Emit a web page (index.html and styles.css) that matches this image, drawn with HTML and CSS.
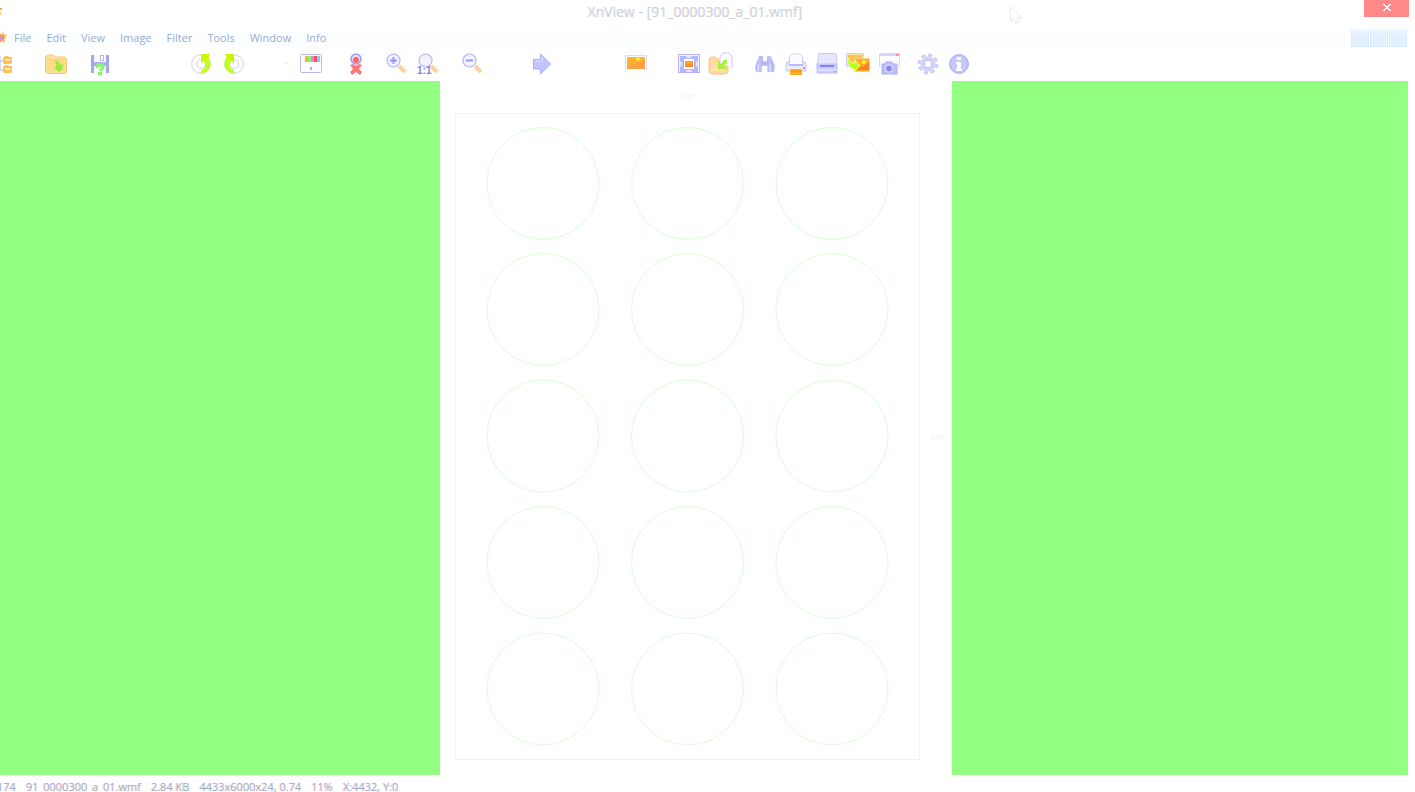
FILE: index.html
```html
<!DOCTYPE html>
<html lang="en">
<head>
<meta charset="utf-8">
<title>XnView - [91_0000300_a_01.wmf]</title>
<link rel="stylesheet" href="styles.css">
</head>
<body>
<div class="window">
<header class="titlebar">
  <svg class="corner" viewBox="0 0 4 12" aria-hidden="true"><path d="M0 2h2v2H0z" fill="#ffb01c"/><path d="M0 6h1v3H0z" fill="#ffc98c"/></svg>
  <h1>XnView - [91_0000300_a_01.wmf]</h1>
  <button class="close" aria-label="Close"><svg viewBox="0 0 8 7" shape-rendering="crispEdges"><path d="M0 0h2v1h1v1h2V1h1V0h2v1H7v1H6v1H5v1h1v1h1v1h1v1H6V6H5V5H3v1H2v1H0V6h1V5h1V4h1V3H2V2H1V1H0z" fill="#fff"/></svg></button>
</header>
<nav class="menubar">
  <svg class="logo" viewBox="0 0 7 14" aria-hidden="true"><path d="M0 2l2 2 1-4 1 4 3-1-2 3 1 1-2 1 1 4-3-2-2 2z" fill="#ffb340"/><circle cx="1" cy="7" r="3" fill="#ff8585"/><circle cx="0" cy="7" r="1.5" fill="#a6a6ff"/></svg>
  <button>File</button><button>Edit</button><button>View</button><button>Image</button><button>Filter</button><button>Tools</button><button>Window</button><button>Info</button>
  <div class="mdi"><button aria-label="Minimize"></button><button aria-label="Restore"></button><button aria-label="Close image"></button></div>
</nav>
<div class="toolbar" role="toolbar">
  <button class="tree" aria-label="Browser"><svg viewBox="0 0 22 22"><path d="M9 3v15M9 8h4M9 17h4" fill="none" stroke="#b5b5ec"/><path d="M12 5l2-2h3l1 1h3v6l-1 1h-7l-1-1zM12 14l2-2h3l1 1h3v6l-1 1h-7l-1-1z" fill="#ffc052"/><path d="M14 6h6v2h-6zM14 15h6v2h-6z" fill="#ffeaa0"/></svg></button>
  <button class="open" aria-label="Open"><svg viewBox="0 0 22 22"><path d="M.5 4l2-2h6l2 2h9.500l1.500 2v13l-1 1.500H2L.5 19z" fill="#ffe098" stroke="#ffc46b"/><path d="M1 7h20" stroke="#ffc97c"/><path d="M2 9h18v9H2z" fill="#ffdc83"/><path d="M9 8c4-1 6 1 6 4l3-1-1 6-3 2-5-4 2-1c1-3 0-4-2-6z" fill="#91ee3c"/></svg></button>
  <button class="save" aria-label="Save as"><svg viewBox="0 0 22 22"><path d="M2 2h3v8h12V2h3v18h-3v-7H5v7H2z" fill="#a5a5f4"/><path d="M6 2h8v7H6z" fill="#f8f8ff"/><path d="M5 9h12v3H5z" fill="#b1b1f6"/><path d="M11 2h4v6h-4z" fill="#b4b4fa"/><path d="M12 3h2v4h-2z" fill="#fff"/><path d="M6 13h10v7H6z" fill="#fbfbff"/><path d="M8 15v-2q3-2 6 0v2l-3 3" fill="none" stroke="#86f76b" stroke-width="3"/><path d="M9 19h4v3H9z" fill="#86f76b"/></svg></button>
  <button class="rotate" aria-label="Rotate left"><svg viewBox="0 0 22 22"><g id="turn"><circle cx="10" cy="11" r="9.300" fill="none" stroke="#d0d0f5"/><circle cx="10" cy="11" r="4.500" fill="none" stroke="#d0d0f5"/><path d="M10 1h9l-2 3c5 6 3 15-7 17v-4c5-1 5-6 3-9l-3 3z" fill="#bfff1c"/><path d="M10 1h9l-2 4-7 3z" fill="#d1f500"/></g></svg></button>
  <button aria-label="Rotate right"><svg viewBox="0 0 22 22"><use href="#turn" transform="matrix(-1 0 0 1 22 0)"/></svg></button>
  <button class="drop" aria-label="More rotations"><svg viewBox="0 0 22 22"><path d="M8 9h6l-3 3z" fill="#f1f1f4"/></svg></button>
  <button aria-label="Adjust colours"><svg viewBox="0 0 22 22"><rect x=".5" y="1.500" width="21" height="18" rx="1" fill="#fcfcff" stroke="#b8b8f3"/><path d="M5 3h3v6H5z" fill="#ffb31d"/><path d="M8 3h3v6H8z" fill="#81f969"/><path d="M11 3h3v6h-3z" fill="#f57cef"/><path d="M14 3h3v6h-3z" fill="#ff5454"/><path d="M17 3h3v6h-3z" fill="#73d3ff"/><path d="M10 14h2v3h-2z" fill="#a9a9e9"/></svg></button>
  <button class="step" aria-label="Remove red eye"><svg viewBox="0 0 22 22"><circle cx="11" cy="6" r="5" fill="#e1e1ff" stroke="#9a9af5" stroke-width="1.500"/><circle cx="11" cy="7" r="3" fill="#ff6565"/><path d="M5 12l3-1 3 2 3-2 3 1-3 4 3 3-2 3-4-3-4 3-2-3 3-3z" fill="#ff7777"/></svg></button>
  <button class="near" aria-label="Zoom in"><svg viewBox="0 0 22 22"><path d="M13 13l6 6" stroke="#ffd09a" stroke-width="4"/><circle cx="7.500" cy="7.500" r="6.500" fill="#f2f2ff" stroke="#b4b4f0" stroke-width="1.200"/><path d="M7.500 4v7M4 7.500h7" stroke="#9898ff" stroke-width="2"/></svg></button>
  <button aria-label="Actual size"><svg viewBox="0 0 22 22"><path d="M14 13l6 6" stroke="#ffd09a" stroke-width="4"/><circle cx="8.500" cy="7.500" r="6.500" fill="#f2f2ff" stroke="#b4b4f0" stroke-width="1.200"/><text class="ratio" x="0" y="21">1:1</text></svg></button>
  <button class="step" aria-label="Zoom out"><svg viewBox="0 0 22 22"><path d="M13 13l6 6" stroke="#ffd09a" stroke-width="4"/><circle cx="7.500" cy="7.500" r="6.500" fill="#f2f2ff" stroke="#b4b4f0" stroke-width="1.200"/><path d="M4 7.500h7" stroke="#9898ff" stroke-width="2"/></svg></button>
  <button class="next" aria-label="Next"><svg viewBox="0 0 22 22"><path d="M2.500 6.500h7V1l10 10-10 10v-5h-7z" fill="#c4c4ff" stroke="#aaaaf3"/><path d="M4 8h7V4" fill="none" stroke="#e6e6ff"/></svg></button>
  <button class="slide" aria-label="Slideshow"><svg viewBox="0 0 22 22"><path d="M0 2.500h22M.5 3v14M21.500 3v14" fill="none" stroke="#dadaf3"/><path d="M2 4h18v12H2z" fill="#ffb22b"/><path d="M2 14l4-3 3 1 4-4 3 2 4-4v10H2z" fill="#ff9f43"/><circle cx="13" cy="6" r="2" fill="#ffe25b"/></svg></button>
  <button class="full" aria-label="Full screen"><svg viewBox="0 0 22 22"><rect x=".5" y="1.500" width="21" height="18" fill="#f5f5ff" stroke="#b3b3ee"/><path d="M2 3h18v16H2z" fill="#b6b6f8"/><path d="M8 3h6l-1 2H9zM8 19h6l-1-2H9zM2 8v6l2-1V9zM20 8v6l-2-1V9z" fill="#e4e4ff"/><path d="M6 6h10v10H6z" fill="#fff"/><path d="M7 8h8v6H7z" fill="#ffa51c"/><path d="M7 13l3-2 2 1 3-2v4H7z" fill="#ff8330"/></svg></button>
  <button aria-label="Open with"><svg viewBox="0 0 22 22"><path d="M11 13V4l3-4h6l3 3v12" fill="#fcfcff" stroke="#c8c8f4"/><path d="M0 6l2-2h4l2 2h2v7h9v6l-2 2H2l-2-2z" fill="#ffdb9e" stroke="#ffc376"/><path d="M18 7v3l-3 3 3 3H9V8l3 3 3-4z" fill="#a6f13d"/><path d="M1 15h8v3H1z" fill="#ffe3ac"/></svg></button>
  <button class="step" aria-label="Search"><svg viewBox="0 0 22 22"><path d="M5 3h4v5h4V3h4l4 10-1 6h-6v-6H8v6H2l-1-6z" fill="#c4c4fa"/><path d="M5 4h3v9M14 4v15M4 9L2 17M18 8l1 10" fill="none" stroke="#ababf0"/><path d="M9 9h4v3H9z" fill="#b7b7f7"/><path d="M4 11v7M16 11v7" stroke="#eeeeff"/></svg></button>
  <button aria-label="Print"><svg viewBox="0 0 22 22"><path d="M4.500 10V3l2-2h9l2 2v7" fill="#fcfcff" stroke="#d0d0f5"/><path d="M1 10l3-2v4h14V8l3 2v8H1z" fill="#ececff" stroke="#c4c4ef"/><path d="M4 12h14" stroke="#9a9aef"/><path d="M5 16h12v6H5z" fill="#ffae28"/><path d="M6 18h10" stroke="#ff9c1c" stroke-width="2"/><path d="M18 14h2v2h-2z" fill="#ff8181"/></svg></button>
  <button aria-label="Scan"><svg viewBox="0 0 22 22"><path d="M3 .5h17l1 11H1z" fill="#e6e6ff" stroke="#c9c9f8"/><path d="M1 11h20v9H1z" fill="#ccccff" stroke="#bdbdf8"/><path d="M4 13h14" stroke="#8585dc" stroke-width="2"/><path d="M1 17h21" stroke="#ececff"/><path d="M18 18h2v1h-2z" fill="#ff8181"/></svg></button>
  <button aria-label="Convert"><svg viewBox="0 0 22 22"><path d="M-.5.500h17v13h-17z" fill="#ffe6a4" stroke="#cfcfff"/><path d="M1 2h14v10H1z" fill="#ffc34a"/><path d="M7.500 5.500h15v13h-15z" fill="#ffad1d" stroke="#ffd28f"/><path d="M9 16l4-3 3 1 6-5v8H9z" fill="#ff7d2d"/><circle cx="17" cy="9" r="2" fill="#fff04e"/><path d="M1 5c2 4 4 5 7 5V7l5 6-6 6v-3C2 15 0 11 1 5z" fill="#baff1e" stroke="#eaff9c"/></svg></button>
  <button aria-label="Capture"><svg viewBox="0 0 22 22"><path d="M1.500 14V.5h20V14" fill="#fdfdff" stroke="#d6d6f8"/><path d="M1 1h20v2H1z" fill="#d4d4fb"/><path d="M18 1h3v2h-3z" fill="#ff8e98"/><path d="M4 11h3l1-2h6l1 2h4v10H4z" fill="#bdbdfb" stroke="#adadf2"/><circle cx="11" cy="15.500" r="4" fill="#e2e2ff"/><circle cx="11" cy="15.500" r="3" fill="#8989f4"/></svg></button>
  <button class="gear" aria-label="Options"><svg viewBox="0 0 22 22"><circle cx="11" cy="11" r="9" fill="none" stroke="#cdcdf8" stroke-width="3" stroke-dasharray="4 3.070"/><circle cx="11" cy="11" r="7" fill="#d6d6ff" stroke="#c6c6f6"/><circle cx="11" cy="11" r="4" fill="#fff" stroke="#b6b6ef"/></svg></button>
  <button aria-label="About"><svg viewBox="0 0 22 22"><circle cx="11" cy="11" r="9.500" fill="#bbbbf6" stroke="#b5b5f0"/><circle cx="11" cy="11" r="8" fill="#c8c8fc"/><path d="M9 4h4v3H9zM8 9h5v7h1v2H8v-2h1v-5H8z" fill="#fff"/></svg></button>
</div>
<main class="canvas">
<svg class="sheet" viewBox="0 0 512 694" role="img" aria-label="Sheet with fifteen round labels">
  <defs><g id="row"><circle cx="103" r="56"/><circle cx="247.500" r="56"/><circle cx="392" r="56"/></g></defs>
  <rect width="512" height="694" fill="#fff"/>
  <g fill="none" stroke="#ddfbdd"><rect x="15.500" y="32.500" width="464" height="646" stroke="#e9f7ee"/>
  <use href="#row" y="102.500"/><use href="#row" y="228.500"/><use href="#row" y="355"/><use href="#row" y="481.500"/><use href="#row" y="608"/></g>
  <text class="dimension" x="248" y="19">297</text><text class="dimension" x="497" y="359">297</text>
</svg>
</main>
<footer class="status"><span>174</span><span>91_0000300_a_01.wmf</span><span>2.84 KB</span><span>4433x6000x24, 0.74</span><span>11%</span><span>X:4432, Y:0</span></footer>
<svg class="pointer" viewBox="0 0 12 19" aria-hidden="true"><path d="M.5.500v15l3.500-3 2 5 3-1-2-5h4.500z" fill="#fff" stroke="#e8e8fa"/></svg>
</div>
</body>
</html>
```
FILE: styles.css
```css
* { box-sizing: border-box; }
body { margin: 0; background: #fff; font-family: "Open Sans", sans-serif; }
button { margin: 0; padding: 0; border: 0; background: none; font: inherit; color: inherit; }
.window { position: relative; display: flex; flex-direction: column; height: 100vh; padding-right: 7px; overflow: hidden; }
.titlebar { display: flex; align-items: flex-start; height: 27px; flex: none; }
.corner { width: 4px; height: 12px; margin-top: 6px; }
.titlebar h1 { flex: 1; margin: 0; padding-left: 22px; font-size: 14px; line-height: 24px; font-weight: 400; text-align: center; color: #c5d2e4; text-shadow: -1px 0 #fff0e0; }
.close { display: flex; align-items: center; justify-content: center; width: 45px; height: 17px; padding-bottom: 2px; margin-right: -1px; background: #ff8989; }
.close svg { width: 8px; height: 7px; }
.menubar { display: flex; align-items: center; flex: none; gap: 15px; height: 21px; background: #fcfeff; color: #96abd0; font-size: 11px; text-shadow: -1px 0 #ffe3d3; }
.logo { width: 7px; height: 14px; margin-right: -8px; }
.mdi { display: flex; gap: 1px; margin-left: auto; padding-right: 1px; }
.mdi button { width: 18px; height: 18px; border: 1px solid #d9eafb; border-top: 4px solid #edf6ff; background: #e2f0ff; box-shadow: inset 0 0 0 1px #e6f3ff; }
.toolbar { display: flex; align-items: flex-start; flex: none; height: 33px; background: linear-gradient(#fcfeff, #fff 6px); }
.toolbar button { flex: none; display: flex; justify-content: center; width: 31px; padding-top: 5px; }
.toolbar svg { width: 22px; height: 22px; overflow: visible; }
.toolbar .tree { margin-left: -14px; }
.toolbar .open { margin-left: 23px; }
.toolbar .save { margin-left: 13px; }
.toolbar .rotate { margin-left: 71px; }
.toolbar .drop { width: 18px; margin-left: 29px; }
.toolbar .step { margin-left: 14px; }
.toolbar .near { margin-left: 10px; }
.toolbar .next { margin-left: 38px; }
.toolbar .slide { margin-left: 63px; }
.toolbar .full { margin-left: 22px; }
.toolbar .gear { margin-left: 8px; }
.ratio { font: bold 10px "Liberation Sans", sans-serif; fill: #8585cf; }
.canvas { flex: 1; min-height: 0; display: flex; justify-content: center; padding-right: 16px; background: #92ff82; }
.sheet { height: 100%; aspect-ratio: 512 / 694; }
.dimension { font: italic 8px "Liberation Sans", sans-serif; fill: #f1f1f3; text-anchor: middle; }
.status { display: flex; flex: none; height: 17px; gap: 10px; overflow: hidden; font-size: 11px; line-height: 24px; white-space: nowrap; color: #96abd0; text-shadow: -1px 0 #ffe3d3; }
.status span:first-child { margin-left: -3px; }
.pointer { position: absolute; left: 1010px; top: 6px; width: 12px; height: 19px; }
```
